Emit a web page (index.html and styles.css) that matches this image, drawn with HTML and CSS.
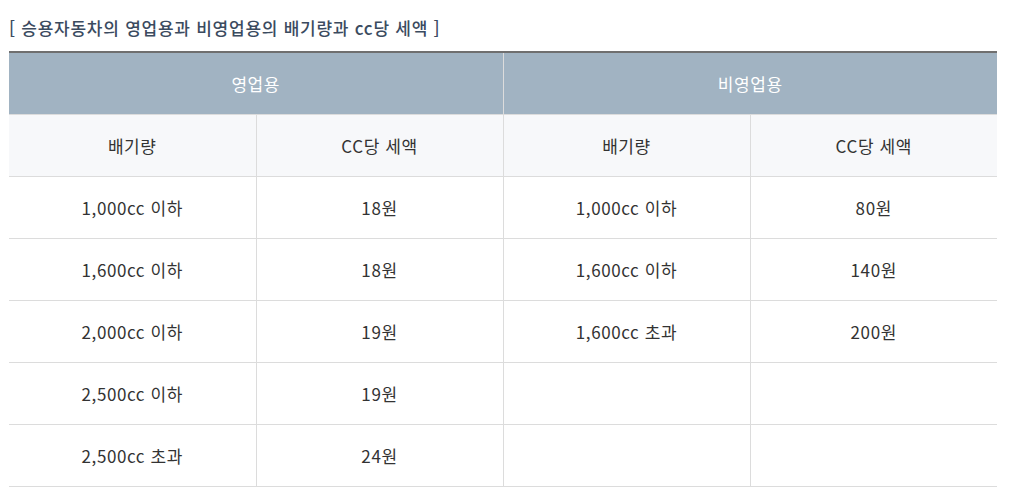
FILE: index.html
```html
<!DOCTYPE html>
<html lang="ko">
<head>
<meta charset="utf-8">
<link rel="stylesheet" href="styles.css">
</head>
<body>
<div class="wrap">
  <p class="title">[ 승용자동차의 영업용과 비영업용의 배기량과 cc당 세액 ]</p>
  <table class="tax">
    <colgroup><col class="c"><col class="c"><col class="c"><col class="c"></colgroup>
    <thead>
      <tr class="group"><th colspan="2">영업용</th><th colspan="2">비영업용</th></tr>
      <tr class="sub"><th>배기량</th><th>CC당 세액</th><th>배기량</th><th>CC당 세액</th></tr>
    </thead>
    <tbody>
      <tr><td>1,000cc 이하</td><td>18원</td><td>1,000cc 이하</td><td>80원</td></tr>
      <tr><td>1,600cc 이하</td><td>18원</td><td>1,600cc 이하</td><td>140원</td></tr>
      <tr><td>2,000cc 이하</td><td>19원</td><td>1,600cc 초과</td><td>200원</td></tr>
      <tr><td>2,500cc 이하</td><td>19원</td><td></td><td></td></tr>
      <tr><td>2,500cc 초과</td><td>24원</td><td></td><td></td></tr>
    </tbody>
  </table>
</div>
</body>
</html>
```

FILE: styles.css
```css
html, body {
  margin: 0;
  padding: 0;
  background: #fff;
}
body {
  font-family: "Noto Sans CJK KR", "Noto Sans", sans-serif;
  color: #333;
}
.wrap {
  padding: 17px 0 0 9px;
}
.title {
  margin: 0 0 12px;
  font-size: 17px;
  line-height: 22px;
  letter-spacing: 0.75px;
  font-weight: 500;
  color: #3b4b5f;
}
.tax {
  width: 988px;
  border-collapse: collapse;
  table-layout: fixed;
  border-top: 2px solid #6f6f6f;
}
.tax th, .tax td {
  text-align: center;
  font-size: 17px;
  letter-spacing: 0.6px;
  font-weight: 400;
  border: 1px solid #dcdcdc;
  padding: 0;
  height: 61px;
}
.tax tr > :first-child { border-left: none; }
.tax tr > :last-child { border-right: none; }
.group th {
  background: #a1b3c2;
  color: #fff;
  border-top: none;
  height: 61px;
}
.sub th {
  background: #f7f8fa;
  color: #333;
}
.tax td { color: #333; }
```
